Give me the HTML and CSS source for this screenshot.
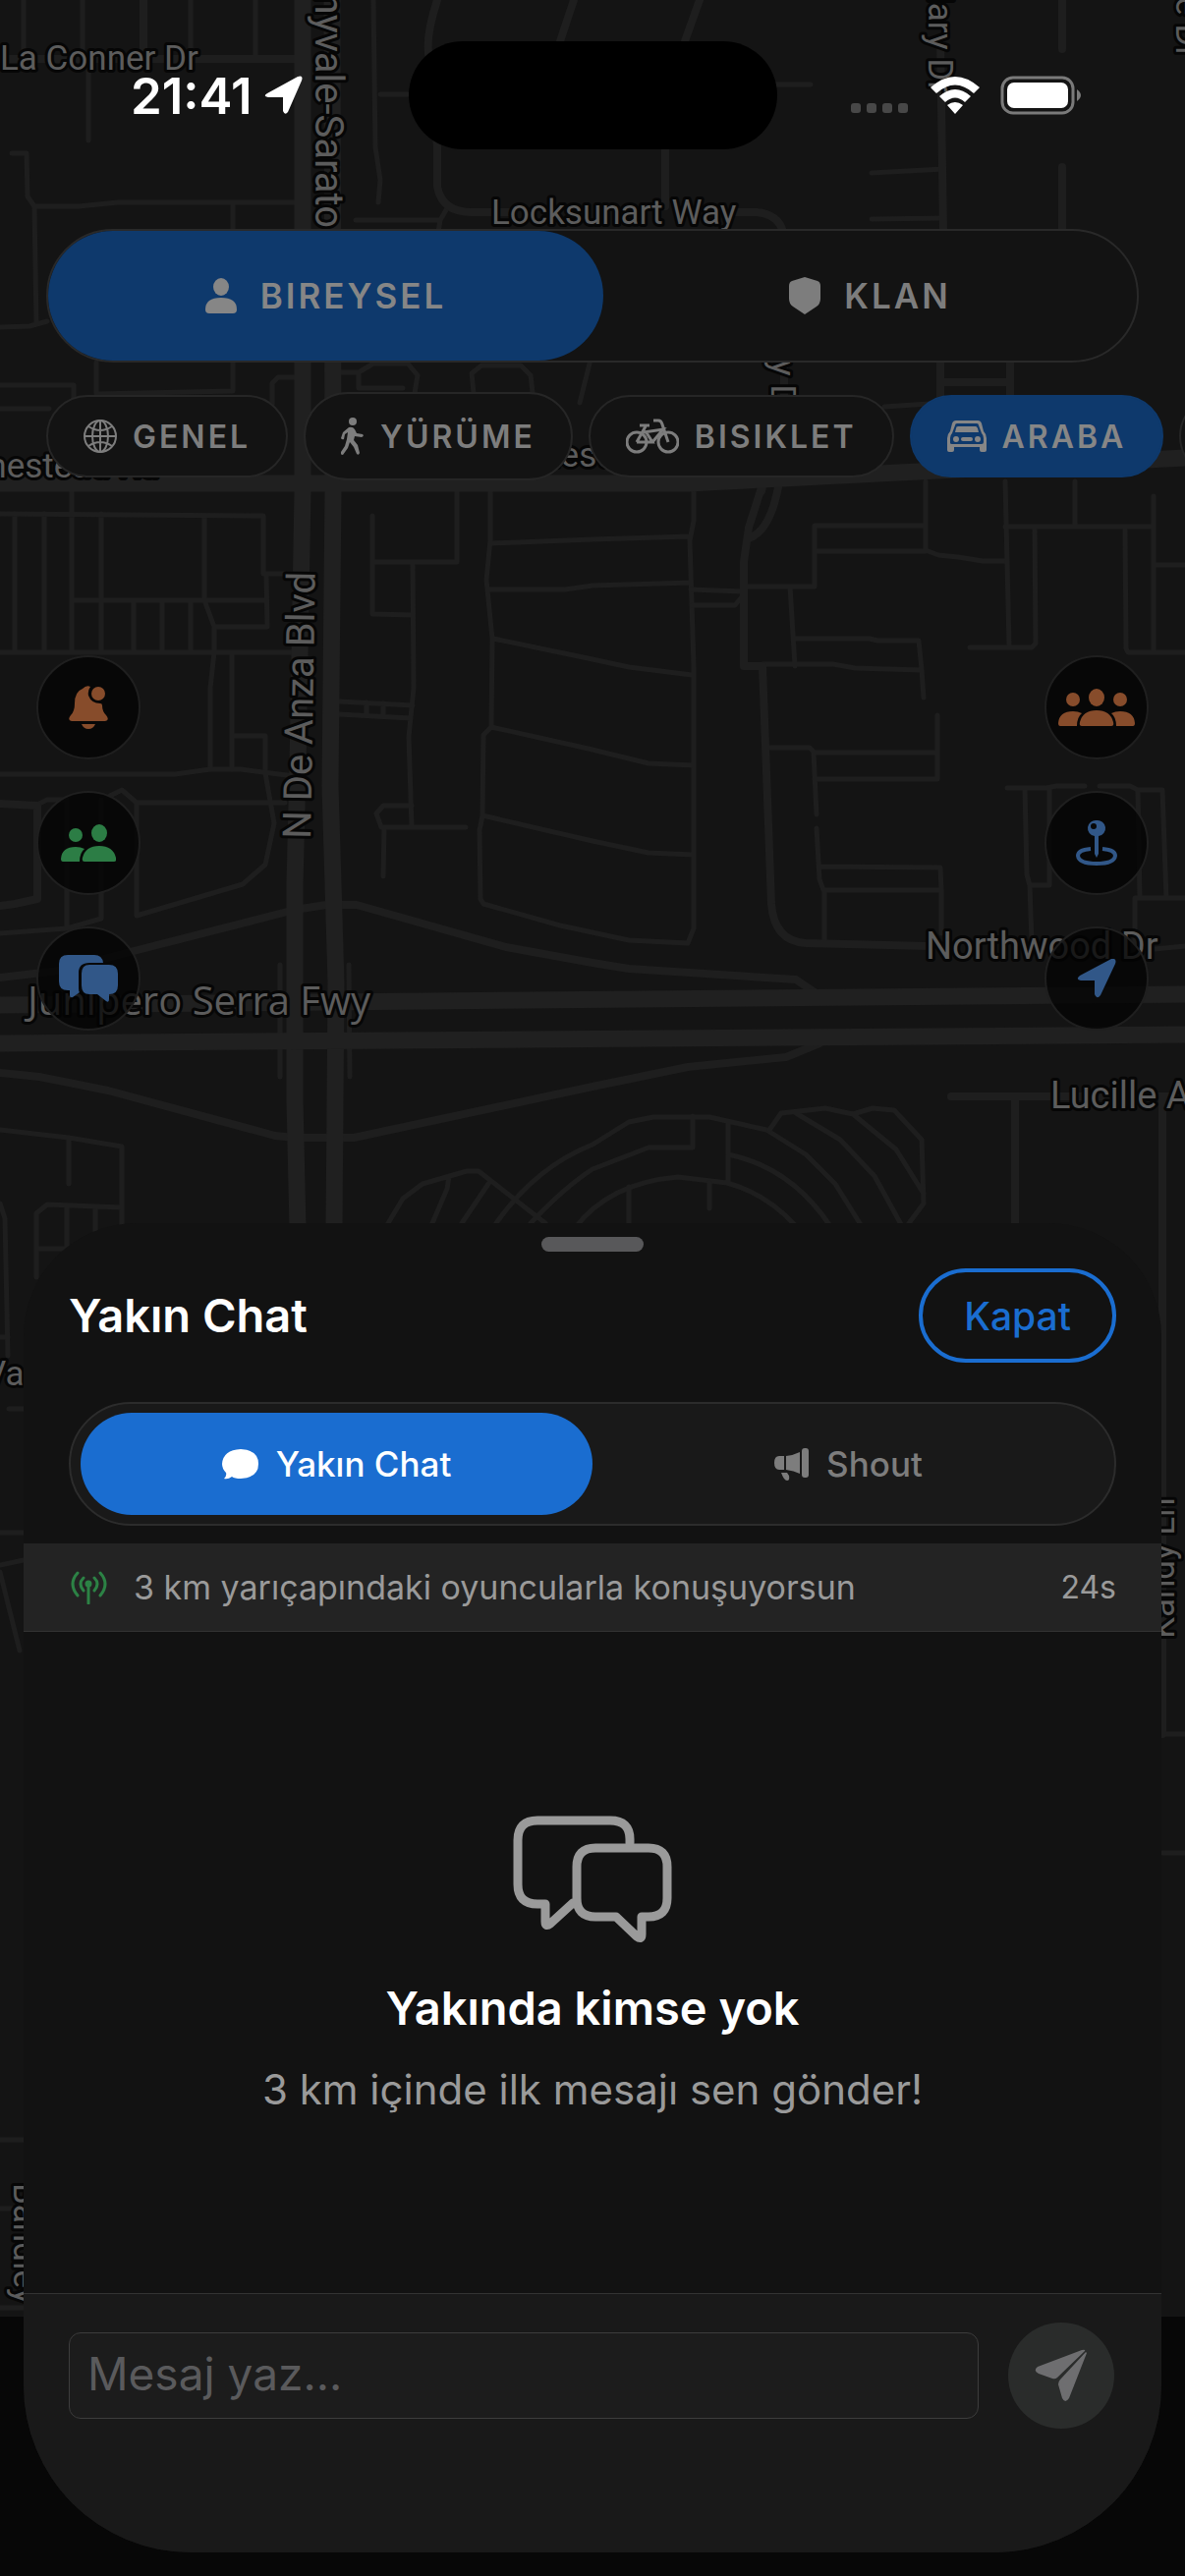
FILE: index.html
```html
<!DOCTYPE html>
<html lang="tr">
<head>
  <meta charset="UTF-8" />
  <meta name="viewport" content="width=device-width, initial-scale=1.0"/>
  <title>Yakın Chat</title>
  <link rel="stylesheet" href="styles.css">
</head>
<body>
  <div class="app">
    <!-- Map -->
    <svg class="map" viewBox="0 0 1206 2622" preserveAspectRatio="xMidYMin slice" aria-hidden="true">
      <rect class="map-land" width="1206" height="2358"/>
      <g class="road-minor">
        <path d="M24 0V60M84 0V60M194 0V60M260 0V60M90 60V143M12 156H27L28 200L35 210H80L120 206H300M35 210L37 330M0 333L30 332L48 327M237 206V233"/>
        <path d="M380 0L382 150L387 183L385 206M387 96H415M362 224H448L455 212M448 224L446 236M790 86H825M887 176L960 172M887 223L960 222M900 414L945 411"/>
        <path d="M98 369V400M237 369V398L98 401M0 392H75V408M0 416H50M300 384H283L277 390V412M345 379H365V395H410M365 379L380 370H415L425 382L422 400M482 400L480 380L490 372H530L540 382L542 400M600 370L590 410"/>
        <path d="M0 523L268 525V584H300M271 584L272 638H218M15 523V664M45 523V664M73 490V664M103 523V664M208 525V611L218 638V664L214 700V783M73 611H271M136 611V664M165 611V664M194 611V664M0 664H300M236 664V783M236 749H270V783"/>
        <path d="M0 788H178L214 783H245L300 790M270 787L279 838L270 880L247 900L139 932V817H290M139 817L124 804L112 810M40 818L48 814H68M68 814V942M103 814V935L68 945L0 950M285 982V1096M355 982L356 1096"/>
        <path d="M379 525V625L420 626M380 572H465V490M420 572L421 700L416 750L419 842M345 714L420 718M345 727L418 731M373 715V728M390 716V729M419 820H390L383 828L388 842H474M391 842L390 892"/>
        <path d="M499 490V550L495 590L501 650L500 740L492 748L491 830L488 845L489 915L492 920L570 942L640 957L700 960L706 945V679L702 550L706 530V490M499 553L603 549L701 546M496 600H575L603 596L703 593M502 650L603 671L640 679L704 687M500 740L603 763L660 777L706 779M491 830L603 856L660 868L706 870"/>
        <path d="M703 600L755 602M705 616H748L757 605M942 490V560L955 565L975 567L1000 571H1024M942 535H829V597H757M829 561H942M804 597L809 678M809 650H885L893 652H935L938 682L940 710M776 676H848L870 680L937 682"/>
        <path d="M1023 490L1027 657M1023 536H1173M1094 490V536M1053 536L1054 655L1050 659H987M1145 540L1146 660L1148 664H1206M1174 505V664M1174 575H1206M784 761H824L829 766H954M954 728V793H829M828 766L831 829M831 843L834 895L838 906H958L957 883L834 882M839 906V958M958 906V950"/>
        <path d="M1025 802H1065L1075 800H1104M1119 800H1150L1158 804H1183L1187 914M1043 802L1045 890L1048 901H1068V804M1048 901L1050 960M1158 804L1160 914M1206 914H1155V960M1165 967L1206 963"/>
        <path d="M0 1150L70 1158L124 1167V1260M70 1158V1205M37 1300V1235L48 1226L124 1229M68 1228V1270M97 1228V1260M37 1271H70M0 1225L5 1240L8 1380M0 1361H8M9 1434H24M0 1560H24M0 1593L24 1588M0 1600L20 1680M0 2178H24M0 2248H24M0 2349H24M1183 1765H1206M1183 1886H1206"/>
        <path d="M395 1245L410 1220L430 1205L475 1192H487L555 1245M457 1197L455 1210L440 1245M497 1205L470 1245M505 1245Q545 1188 603 1165L640 1142L665 1137H722L780 1150L820 1175L850 1205L875 1245M540 1245Q575 1208 603 1190L660 1168H705V1136M585 1250Q620 1204 690 1198L740 1204Q780 1215 810 1248M741 1144V1204M741 1175Q805 1188 845 1248"/>
        <path d="M783 1150L795 1133L840 1128L868 1134L888 1128L910 1130L938 1160L940 1225L925 1245M810 1133L855 1160L890 1197L918 1248M868 1134L912 1170L940 1215M640 1208V1245M722 1204V1230"/>
      </g>
      <g class="road-medium">
        <path d="M146 0V60M0 60H300M445 0Q432 40 437 60L445 150V190Q450 216 480 216H520M584 0L570 42M712 0L697 42M677 152V210M735 216H770Q792 218 797 236M957 40L960 236M1081 0V50M1081 170V236M957 369V404M1028 369V404M957 389H1028M798 369V404M780 480L775 500M0 818L38 820V915L15 920L0 922"/>
        <path d="M0 995L60 988L140 967L300 926L332 921H363L515 964L603 980L640 986L810 997L832 1012M0 1092L40 1096L110 1110L280 1156L300 1158H360L603 1106L700 1086L800 1076L834 1062"/>
        <path d="M777 490L762 537L757 572V678H776L785 920Q788 958 820 960L945 963M793 490Q785 540 762 548M968 1116H1206M1033 1116V1250M1183 1116V1765"/>
      </g>
      <g class="road-major">
        <path d="M308 0V500L303 780L300 900V1120L303 1250M338 0L339 500L336 800L342 1000L340 1250M0 1023L1206 1012M0 1062L1206 1053M0 492H700L1206 466"/>
      </g>
      <g class="map-labels">
        <text x="0" y="71">La Conner Dr</text>
        <text x="500" y="228">Locksunart Way</text>
        <text class="label-large" transform="translate(321 232) rotate(90)" text-anchor="end">Sunnyvale-Sarato</text>
        <text transform="translate(945 94) rotate(90)" text-anchor="end">Mary Dr</text>
        <text transform="translate(1197 59) rotate(90)" text-anchor="end">ke Dr</text>
        <text transform="translate(785 426) rotate(90)" text-anchor="end">y Dr</text>
        <text x="-44" y="486">omestead Rd</text>
        <text x="495" y="475">Homestead Rd</text>
        <text class="label-large" transform="translate(316 854) rotate(-89)">N De Anza Blvd</text>
        <text class="label-wide" x="28" y="1033">Junipero Serra Fwy</text>
        <text class="label-street" x="942" y="976">Northwood Dr</text>
        <text class="label-street" x="1069" y="1128">Lucille Ave</text>
        <text x="-16" y="1410">Va</text>
        <text transform="translate(1195 1668) rotate(-90)">Kandy Ln</text>
        <text transform="translate(14 2222) rotate(90)">Bandley</text>
      </g>
    </svg>

    <!-- Status bar -->
    <header class="status-bar">
      <div class="status-left">
        <span class="status-time">21:41</span>
        <svg width="40" height="40" viewBox="0 0 40 40"><path d="M3 18L34 1Q40-1 38 5L24 37Q21 41 19 36V22H4Q-2 21 3 18Z"/></svg>
      </div>
      <div class="island"></div>
      <div class="status-right">
        <svg class="signal" width="60" height="10" viewBox="0 0 60 10"><rect width="10" height="10" rx="3"/><rect x="16" width="10" height="10" rx="3"/><rect x="32" width="10" height="10" rx="3"/><rect x="48" width="10" height="10" rx="3"/></svg>
        <svg width="52" height="38" viewBox="0 0 52 38"><path d="M1 11Q26-11 51 11L45 17Q26 0 7 17ZM10 20Q26 6 42 20L36 26Q26 17 16 26ZM18 29Q26 23 34 29L26 38Z"/></svg>
        <svg width="84" height="40" viewBox="0 0 84 40"><rect x="2" y="2" width="72" height="36" rx="11" fill="none" stroke="#7a7a7a" stroke-width="3"/><rect x="7" y="7" width="62" height="26" rx="7"/><path d="M78 14Q86 20 78 26Z" fill="#7a7a7a"/></svg>
      </div>
    </header>

    <!-- Mode switch -->
    <nav class="mode-switch">
      <button class="mode-btn active" type="button">
        <svg width="32" height="36" viewBox="0 0 32 36"><ellipse cx="16" cy="9" rx="8" ry="9"/><path d="M0 32Q0 20 16 20T32 32Q32 36 28 36H4Q0 36 0 32Z"/></svg>
        BIREYSEL
      </button>
      <button class="mode-btn" type="button">
        <svg width="32" height="38" viewBox="0 0 32 38"><path d="M16 0L29 4Q32 5 32 9V22Q32 27 28 30L16 38L4 30Q0 27 0 22V9Q0 5 3 4Z"/></svg>
        KLAN
      </button>
    </nav>

    <!-- Activity filters -->
    <div class="chips">
      <button class="chip" type="button">
        <svg class="line" width="34" height="34" viewBox="0 0 34 34"><circle cx="17" cy="17" r="16"/><ellipse cx="17" cy="17" rx="8" ry="16"/><path d="M17 1V33M1 17H33M5 7Q17 15 29 7M5 27Q17 19 29 27"/></svg>
        GENEL
      </button>
      <button class="chip chip-tall" type="button">
        <svg width="24" height="38" viewBox="0 0 24 38"><circle cx="12" cy="4" r="4"/><path d="M8 10Q12 9 14 12L16 16L22 17Q24 19 21 20L14 19L13 23L17 28L19 36Q18 39 16 37L13 30L9 25L7 31L2 38Q-1 38 0 35L4 29L6 22L7 15L4 17L3 22Q1 23 0 21L2 15Z"/></svg>
        YÜRÜME
      </button>
      <button class="chip" type="button">
        <svg class="line bike" width="54" height="36" viewBox="0 0 54 36"><circle cx="11" cy="24" r="10"/><circle cx="43" cy="24" r="10"/><path d="M28 2H33Q36 2 37 6L43 24M11 24L20 8M14 7H24M20 13L27 24H11M18 14L38 11L27 24"/></svg>
        BISIKLET
      </button>
      <button class="chip active" type="button">
        <svg width="40" height="32" viewBox="0 0 40 32"><path fill-rule="evenodd" d="M9 0H31Q34 0 35 3L37 11Q40 14 40 18V30Q40 32 38 32H35Q33 32 33 30V27H7V30Q7 32 5 32H2Q0 32 0 30V18Q0 14 3 11L5 3Q6 0 9 0ZM10 3Q8 3 8 5L5 13Q3 15 3 18V23Q3 24 5 24H35Q37 24 37 22V18Q37 15 35 13L32 5Q32 3 30 3Z"/><path d="M11 6H29Q30 6 31 8L32 12H8L9 8Q9 6 11 6Z"/><circle cx="9" cy="19" r="3"/><circle cx="31" cy="19" r="3"/><rect x="14" y="17" width="12" height="4" rx="2"/></svg>
        ARABA
      </button>
      <button class="chip" type="button">UÇAK</button>
    </div>

    <!-- Floating map actions -->
    <div class="map-actions">
      <div class="action-group">
        <button class="action orange" type="button" aria-label="Bildirimler">
          <svg width="40" height="44" viewBox="0 0 40 44"><path d="M14 3Q18-1 22 1Q19 5 20 10Q23 18 32 18Q34 18 34 20Q34 26 38 30Q42 35 37 36H3Q-2 35 2 30Q6 26 6 18Q6 6 14 3Z"/><circle cx="30" cy="8" r="7"/><path d="M13 39H27Q25 44 20 44T13 39Z"/></svg>
        </button>
        <button class="action green" type="button" aria-label="Arkadaşlar">
          <svg width="56" height="38" viewBox="0 0 56 38"><circle cx="15" cy="11" r="7"/><ellipse cx="39" cy="9" rx="8" ry="9"/><path d="M2 38Q0 38 0 35Q1 23 15 23Q20 23 24 25Q19 29 19 38ZM24 38Q21 38 22 34Q25 22 39 22T56 34Q57 38 54 38Z"/></svg>
        </button>
        <button class="action blue" type="button" aria-label="Yakın Chat">
          <svg width="60" height="48" viewBox="0 0 60 48"><path d="M9 0H36Q44 0 45 8H31Q20 8 20 18V34Q20 37 21 38L14 43Q11 44 11 41V36H9Q0 36 0 27V9Q0 0 9 0Z"/><path d="M31 10H51Q60 10 60 19V31Q60 40 51 40V45Q51 49 48 47L39 40H31Q23 40 23 31V19Q23 10 31 10Z"/></svg>
        </button>
      </div>
      <div class="action-group">
        <button class="action orange" type="button" aria-label="Klan üyeleri">
          <svg width="78" height="38" viewBox="0 0 78 38"><circle cx="15" cy="11" r="7"/><circle cx="63" cy="11" r="7"/><ellipse cx="39" cy="9" rx="8" ry="9"/><path d="M2 38Q0 38 0 35Q1 23 15 23Q20 23 24 25Q19 29 19 38ZM76 38Q78 38 78 35Q77 23 63 23Q58 23 54 25Q59 29 59 38ZM24 38Q21 38 22 34Q25 22 39 22T56 34Q57 38 54 38Z"/></svg>
        </button>
        <button class="action blue" type="button" aria-label="Konum iğnesi">
          <svg width="42" height="48" viewBox="0 0 42 48"><path fill-rule="evenodd" d="M21 1A8 8 0 0 1 23 17V35L21 39L19 35V17A8 8 0 0 1 21 1ZM18 4A3 3 0 1 0 18 10A3 3 0 1 0 18 4Z"/><path fill="none" stroke="currentColor" stroke-width="4" d="M15 30Q2 31 2 37Q3 45 21 45T40 37Q40 31 27 30"/></svg>
        </button>
        <button class="action blue" type="button" aria-label="Konumum">
          <svg width="40" height="40" viewBox="0 0 40 40"><path d="M3 17L35 0Q41-1 39 5L24 37Q20 42 18 36V22H4Q-2 21 3 17Z"/></svg>
        </button>
      </div>
    </div>

    <!-- Chat sheet -->
    <main class="sheet">
      <div class="grabber"></div>
      <div class="sheet-header">
        <h1>Yakın Chat</h1>
        <button class="close-btn" type="button">Kapat</button>
      </div>

      <div class="tabs">
        <button class="tab active" type="button">
          <svg width="37" height="31" viewBox="0 0 37 31"><path d="M19 0Q37 1 37 15T19 30Q13 30 10 28Q6 31 2 30Q5 27 4 24Q0 20 0 15Q1 1 19 0Z"/></svg>
          Yakın Chat
        </button>
        <button class="tab" type="button">
          <svg width="35" height="33" viewBox="0 0 35 33"><path d="M5 8H10V22H5Q0 22 0 15T5 8ZM12 8Q20 7 26 4V26Q20 23 12 22ZM7 25H13L15 28Q16 33 13 33T7 25Z"/><rect x="28" width="7" height="30" rx="3"/></svg>
          Shout
        </button>
      </div>

      <div class="range-bar">
        <svg width="40" height="34" viewBox="0 0 40 34"><path d="M9 2Q-1 13 9 25M32 2Q42 13 32 25M15 7Q9 13 15 20M26 7Q32 13 26 20M20 13V33"/><circle cx="20" cy="13" r="2"/></svg>
        <span class="range-text">3 km yarıçapındaki oyuncularla konuşuyorsun</span>
        <span class="range-time">24s</span>
      </div>

      <div class="empty">
        <svg width="162" height="130" viewBox="0 0 162 130"><path d="M119 28V24Q119 5 99 5H25Q5 5 5 25V70Q5 90 25 90H33V108Q33 114 38 110L61 89"/><path d="M84 33H138Q157 33 157 52V84Q157 103 138 103H131V121Q131 127 126 123L105 103H84Q65 103 65 84V52Q65 33 84 33Z"/></svg>
        <h2>Yakında kimse yok</h2>
        <p>3 km içinde ilk mesajı sen gönder!</p>
      </div>

      <form class="composer">
        <input class="message-input" type="text" placeholder="Mesaj yaz..." aria-label="Mesaj">
        <button class="send-btn" type="button" aria-label="Gönder">
          <svg width="54" height="54" viewBox="0 0 54 54"><path d="M3 18L48 1Q52 0 51 2L23 29Q21 31 18 30L4 25Q-2 22 3 18ZM53 4L35 50Q31 56 28 50L24 36Q24 33 26 31L52 3Z"/></svg>
        </button>
      </form>
    </main>
  </div>
</body>
</html>
```
FILE: styles.css
```css
:root {
  --accent: #1a6dd0;
  --accent-dim: #0e396c;
  --bg: #070707;
  --sheet: #121212;
  --surface: #191919;
  --line: #2c2c2c;
  --muted: #9a9a9a;
  --dim: #7d7d7d;
}

* {
  box-sizing: border-box;
}

body {
  margin: 0;
  background: var(--bg);
  color: #fff;
  font-family: Inter, "Noto Sans", sans-serif;
}

button, input {
  font-family: inherit;
  margin: 0;
}

button {
  cursor: pointer;
}

svg {
  fill: currentColor;
  flex-shrink: 0;
}

.app {
  position: relative;
  display: flex;
  flex-direction: column;
  min-height: 100vh;
  padding-bottom: 24px;
  overflow: hidden;
}

/* Map background */
.map {
  position: absolute;
  inset: 0;
  width: 100%;
  height: 100%;
}

.map-land {
  fill: #141414;
}

.road-minor, .road-medium, .road-major {
  fill: none;
  stroke: #1e1e1e;
  stroke-width: 5px;
  stroke-linecap: round;
  stroke-linejoin: round;
}

.road-medium {
  stroke-width: 8px;
}

.road-major {
  stroke: #202020;
  stroke-width: 17px;
}

.map-labels {
  font-family: Roboto, sans-serif;
  font-size: 35px;
  fill: #5c5c5c;
  stroke: #060606;
  stroke-width: 6px;
  stroke-linejoin: round;
  paint-order: stroke;
}

.label-large {
  font-size: 40px;
}

.label-street {
  font-size: 38px;
}

.label-wide {
  font-family: "Open Sans", sans-serif;
  font-size: 40px;
}

/* Status bar */
.status-bar {
  position: relative;
  display: grid;
  grid-template-columns: 1fr 375px 1fr;
  align-items: center;
  height: 110px;
  margin: 42px 0 81px;
}

.status-left, .status-right {
  display: flex;
  align-items: center;
}

.status-left {
  justify-content: flex-end;
  gap: 12px;
  padding-right: 107px;
}

.status-time {
  font-size: 51px;
  font-weight: 600;
}

.status-right {
  gap: 20px;
  padding-left: 75px;
}

.signal {
  color: #484848;
  margin-top: 26px;
}

.island {
  height: 110px;
  border-radius: 55px;
  background: #000;
}

/* Mode switch */
.mode-switch {
  position: relative;
  display: flex;
  margin: 0 47px;
  height: 136px;
  border: 2px solid #292929;
  border-radius: 68px;
  background: #131313;
}

.mode-btn {
  flex: 1;
  display: flex;
  align-items: center;
  justify-content: center;
  gap: 24px;
  border: none;
  border-radius: 66px;
  background: transparent;
  color: var(--dim);
  font-size: 35px;
  font-weight: 600;
  letter-spacing: 3px;
}

.mode-btn.active {
  flex: 0 0 51%;
  background: var(--accent-dim);
  color: #868686;
}

/* Activity filters */
.chips {
  position: relative;
  display: flex;
  align-items: center;
  gap: 16px;
  margin-top: 30px;
  padding-left: 47px;
  overflow: hidden;
}

.chip {
  display: flex;
  flex-shrink: 0;
  align-items: center;
  gap: 16px;
  height: 84px;
  padding: 0 36px;
  border: 2px solid #262626;
  border-radius: 42px;
  background: #131313;
  color: var(--dim);
  font-size: 32px;
  font-weight: 600;
  letter-spacing: 3px;
}

.chip-tall {
  height: 90px;
  border-radius: 45px;
}

.chip.active {
  border-color: var(--accent-dim);
  background: var(--accent-dim);
  color: #868686;
}

.line {
  fill: none;
  stroke: currentColor;
  stroke-width: 2px;
}

.bike {
  stroke-width: 3px;
}

/* Floating map actions */
.map-actions {
  position: relative;
  display: flex;
  justify-content: space-between;
  margin: 178px 37px 196px;
}

.action-group {
  display: flex;
  flex-direction: column;
  gap: 32px;
}

.action {
  display: flex;
  align-items: center;
  justify-content: center;
  width: 106px;
  height: 106px;
  padding: 0;
  border: 2px solid #1f1f1f;
  border-radius: 50%;
  background: rgba(3, 3, 3, 0.75);
}

.orange {
  color: #874c2b;
}

.green {
  color: #2c7d45;
}

.blue {
  color: #315788;
}

/* Chat sheet */
.sheet {
  position: relative;
  display: flex;
  flex: 1;
  flex-direction: column;
  margin: 0 24px;
  border-radius: 115px 115px 170px 170px;
  background: var(--sheet);
  overflow: hidden;
}

.grabber {
  width: 104px;
  height: 15px;
  margin: 14px auto 17px;
  border-radius: 8px;
  background: #58585a;
}

.sheet-header {
  display: flex;
  align-items: center;
  justify-content: space-between;
  padding: 0 46px;
}

.sheet-header h1, .empty h2 {
  margin: 0;
  font-size: 47px;
  line-height: 56px;
  font-weight: 600;
}

.close-btn {
  height: 96px;
  padding: 0 42px;
  border: 4px solid var(--accent);
  border-radius: 48px;
  background: transparent;
  color: var(--accent);
  font-size: 39px;
  font-weight: 500;
}

.tabs {
  display: flex;
  height: 126px;
  margin: 40px 46px 18px;
  padding: 9px 10px;
  border: 2px solid var(--line);
  border-radius: 63px;
  background: var(--surface);
}

.tab {
  flex: 1;
  display: flex;
  align-items: center;
  justify-content: center;
  gap: 18px;
  border: none;
  border-radius: 52px;
  background: transparent;
  color: var(--dim);
  font-size: 35px;
  font-weight: 500;
}

.tab.active {
  background: var(--accent);
  color: #fff;
}

.range-bar {
  display: flex;
  align-items: center;
  height: 90px;
  padding: 0 46px;
  border-bottom: 1px solid #333;
  background: #232323;
  color: var(--muted);
  font-size: 34px;
}

.range-bar svg {
  fill: none;
  stroke: #2c8245;
  stroke-width: 3px;
  stroke-linecap: round;
}

.range-text {
  margin-left: 26px;
}

.range-time {
  margin-left: auto;
  font-size: 32px;
}

.empty {
  flex: 1;
  display: flex;
  flex-direction: column;
  align-items: center;
  justify-content: center;
  padding-top: 4px;
  color: var(--muted);
}

.empty svg {
  fill: none;
  stroke: currentColor;
  stroke-width: 9px;
  stroke-linecap: round;
  stroke-linejoin: round;
}

.empty h2 {
  margin-top: 38px;
  color: #fff;
}

.empty p {
  margin: 30px 0 0;
  font-size: 42px;
  line-height: 50px;
}

.composer {
  display: flex;
  align-items: center;
  gap: 30px;
  padding: 29px 48px 126px 46px;
  border-top: 1px solid #333;
  background: var(--surface);
}

.message-input {
  flex: 1;
  min-width: 0;
  height: 88px;
  padding: 0 18px 4px;
  border: 1px solid #3c3c3c;
  border-radius: 12px;
  background: #1c1c1c;
  color: #fff;
  font-size: 46px;
}

.message-input::placeholder {
  color: #5a5a5c;
}

.send-btn {
  display: flex;
  align-items: center;
  justify-content: center;
  width: 108px;
  height: 108px;
  padding: 0;
  border: none;
  border-radius: 50%;
  background: #2a2c2b;
  color: #6e6e70;
}

@media (max-width: 768px) {
  .chips {
    overflow-x: auto;
  }
}
```
